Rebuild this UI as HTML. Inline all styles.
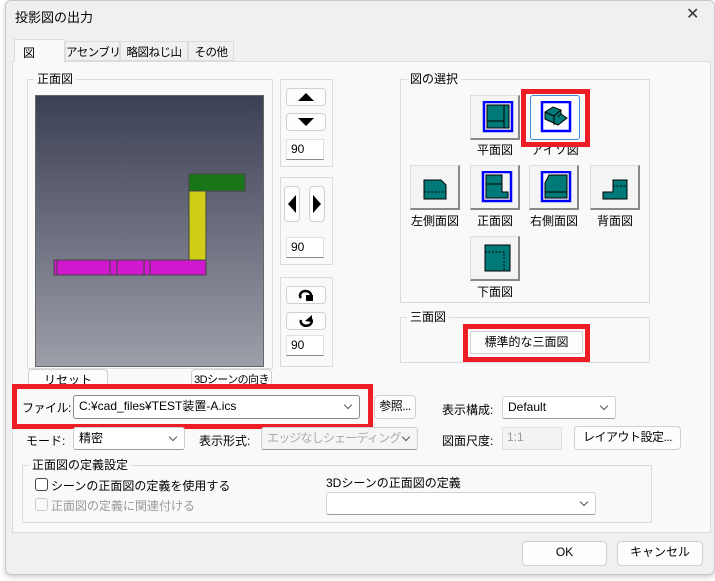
<!DOCTYPE html>
<html><head><meta charset="utf-8"><style>
*{box-sizing:border-box;margin:0;padding:0}
body{width:715px;height:581px;background:#fff;font-family:"Liberation Sans","Noto Sans CJK JP",sans-serif;font-size:12px;color:#000;position:relative;overflow:hidden;white-space:nowrap}
.a{position:absolute}
.win{left:5px;top:0;width:710px;height:575px;background:#f0f0f0;border:1px solid #c8c8c8;border-radius:6px;box-shadow:0 2px 6px rgba(0,0,0,.2)}
.grp{position:absolute;border:1px solid #dcdcdc}
.gl{position:absolute;background:#f9f9f9;padding:0 3px;top:-9px;left:6px;line-height:16px}
.btn{position:absolute;background:#fdfdfd;border:1px solid #d0d0d0;border-radius:4px;text-align:center;line-height:20px;overflow:hidden}
.inp{position:absolute;background:#fff;border:1px solid #e0e0e0;border-bottom:1px solid #888;padding-left:4px;line-height:19px}
.cmb{position:absolute;background:#fff;border:1px solid #d0d0d0;border-bottom-color:#999;border-radius:3px;padding-left:5px;line-height:20px;overflow:hidden}
.cmb:after{content:"";position:absolute;right:8px;top:6px;width:5px;height:5px;border-right:1px solid #555;border-bottom:1px solid #555;transform:rotate(45deg)}
.ib{position:absolute;width:50px;height:45px;background:#f4f4f4;border:1px solid #ddd;border-right:2px solid #888;border-bottom:2px solid #888}
.ib svg{position:absolute;left:5px;top:5px}
.lb{position:absolute;width:70px;text-align:center}
.red{position:absolute;border:5px solid #ee1c25}
.t{position:absolute;top:41px;height:20px;background:#f0f0f0;border:1px solid #dcdcdc;padding:2px 0;text-align:center;font-size:11.5px;letter-spacing:-0.5px}
</style></head><body>
<div class="a win"></div>
<div class="a" style="left:15px;top:7px;font-size:13px">投影図の出力</div>
<div class="a" style="left:686px;top:4px;font-size:16px;color:#333">✕</div>
<div class="a" style="left:12px;top:61px;width:699px;height:472px;background:#f9f9f9;border:1px solid #dcdcdc"></div>
<div class="a" style="left:14px;top:39px;width:51px;height:23px;background:#f9f9f9;border:1px solid #dcdcdc;border-bottom:none;padding:4px 8px">図</div>
<div class="t" style="left:65px;width:55px">アセンブリ</div>
<div class="t" style="left:120px;width:68px">略図ねじ山</div>
<div class="t" style="left:188px;width:46px">その他</div>
<div class="grp" style="left:27px;top:79px;width:246px;height:290px"><div class="gl">正面図</div></div>
<div class="a" style="left:35px;top:95px;width:229px;height:272px;border:1px solid #666;background:linear-gradient(#3c4055,#9c9ea8)">
<svg width="229" height="272" style="position:absolute;left:-1px;top:-1px">
<rect x="154" y="79" width="56" height="17" fill="#187618" stroke="#444"/>
<rect x="154" y="96" width="17" height="69" fill="#d0cd16" stroke="#444"/>
<rect x="19" y="165" width="152" height="15" fill="#d018cf" stroke="#444"/>
<line x1="22" y1="165" x2="22" y2="180" stroke="#444"/>
<line x1="75" y1="165" x2="75" y2="180" stroke="#444"/>
<line x1="82" y1="165" x2="82" y2="180" stroke="#444"/>
<line x1="109" y1="165" x2="109" y2="180" stroke="#444"/>
<line x1="115" y1="165" x2="115" y2="180" stroke="#444"/>
</svg></div>
<div class="grp" style="left:280px;top:79px;width:53px;height:88px"></div>
<div class="btn" style="left:286px;top:88px;width:40px;height:18px"><svg width="38" height="16"><path d="M11 12 L19 4 L27 12Z"/></svg></div>
<div class="btn" style="left:286px;top:113px;width:40px;height:18px"><svg width="38" height="16"><path d="M11 4 L19 12 L27 4Z"/></svg></div>
<div class="inp" style="left:286px;top:139px;width:38px;height:21px">90</div>
<div class="grp" style="left:280px;top:177px;width:53px;height:88px"></div>
<div class="btn" style="left:284px;top:186px;width:16px;height:36px"><svg width="14" height="34"><path d="M11 8 L3 17 L11 26Z"/></svg></div>
<div class="btn" style="left:309px;top:186px;width:16px;height:36px"><svg width="14" height="34"><path d="M3 8 L11 17 L3 26Z"/></svg></div>
<div class="inp" style="left:286px;top:237px;width:38px;height:21px">90</div>
<div class="grp" style="left:280px;top:277px;width:53px;height:90px"></div>
<div class="btn" style="left:286px;top:286px;width:40px;height:18px"><svg width="38" height="16"><path d="M14 11 A5.5 4.5 0 1 1 24 9" fill="none" stroke="#000" stroke-width="2.5"/><path d="M19 8 L26 8 L26 14 L19 14Z"/></svg></div>
<div class="btn" style="left:286px;top:312px;width:40px;height:18px"><svg width="38" height="16"><path d="M24 6 A5.5 4.5 0 1 1 14 7" fill="none" stroke="#000" stroke-width="2.5"/><path d="M18 8 L25 2 L25 9 Z"/></svg></div>
<div class="inp" style="left:286px;top:335px;width:38px;height:21px">90</div>
<div class="grp" style="left:400px;top:79px;width:250px;height:224px"><div class="gl">図の選択</div></div>
<div class="ib" style="left:470px;top:95px"><svg width="40" height="34"><rect x="8" y="1" width="28" height="29" fill="none" stroke="#00f" stroke-width="2.5"/><rect x="11" y="4" width="22" height="23" fill="#007a78" stroke="#000"/><path d="M11 20H28M28 4V27" stroke="#000" fill="none"/></svg></div>
<div class="lb" style="left:460px;top:141px">平面図</div>
<div class="lb" style="left:520px;top:141px">アイソ図</div>
<div class="red" style="left:521px;top:89px;width:69px;height:58px"></div>
<div class="ib" style="left:530px;top:95px;border:1px solid #3a8ad8;border-radius:3px;background:#fdfdfd"><svg width="40" height="34"><rect x="6" y="1" width="28" height="29" fill="none" stroke="#00f" stroke-width="2.5"/><path d="M9 11 L17 6 L25 9 L25 13 L31 17 L22 24 L9 18Z" fill="#007a78" stroke="#000"/><path d="M9 11 L18 15 L25 9M18 15V24M22 16 L25 13" stroke="#000" fill="none"/></svg></div>
<div class="ib" style="left:410px;top:165px"><svg width="40" height="34"><path d="M8 9H25L30 14V28H8Z" fill="#007a78" stroke="#000"/><path d="M8 21H30" stroke="#000" stroke-dasharray="2 1.5"/></svg></div>
<div class="ib" style="left:470px;top:165px"><svg width="40" height="34"><rect x="7" y="1" width="28" height="29" fill="none" stroke="#00f" stroke-width="2.5"/><path d="M10 4H26V21H32V27H10Z" fill="#007a78" stroke="#000"/><path d="M10 13H26" stroke="#000"/></svg></div>
<div class="ib" style="left:529px;top:165px"><svg width="40" height="34"><rect x="7" y="1" width="28" height="29" fill="none" stroke="#00f" stroke-width="2.5"/><path d="M14 4H32V27H10V12Z" fill="#007a78" stroke="#000"/><path d="M10 21H32" stroke="#000"/></svg></div>
<div class="ib" style="left:590px;top:165px"><svg width="40" height="34"><path d="M17 9H31V28H7V21H17Z" fill="#007a78" stroke="#000"/><path d="M17 15H31" stroke="#000" stroke-dasharray="2 1.5"/></svg></div>
<div class="lb" style="left:400px;top:212px">左側面図</div>
<div class="lb" style="left:460px;top:212px">正面図</div>
<div class="lb" style="left:519px;top:212px">右側面図</div>
<div class="lb" style="left:580px;top:212px">背面図</div>
<div class="ib" style="left:470px;top:236px"><svg width="40" height="34"><rect x="9" y="3" width="25" height="26" fill="#007a78" stroke="#000"/><path d="M9 10H28V29" stroke="#000" fill="none" stroke-dasharray="2 1.5"/></svg></div>
<div class="lb" style="left:460px;top:283px">下面図</div>
<div class="grp" style="left:400px;top:317px;width:250px;height:46px"><div class="gl">三面図</div></div>
<div class="red" style="left:463px;top:324px;width:127px;height:38px"></div>
<div class="btn" style="left:470px;top:331px;width:113px;height:23px;border-radius:2px">標準的な三面図</div>
<div class="btn" style="left:28px;top:369px;width:80px;height:22px">リセット</div>
<div class="btn" style="left:191px;top:369px;width:81px;height:22px;font-size:11px;letter-spacing:-0.6px">3Dシーンの向き</div>
<div class="a" style="left:12px;top:384px;width:361px;height:45px;background:#f9f9f9;border:5px solid #ee1c25"></div>
<div class="a" style="left:22px;top:399px;letter-spacing:-0.5px">ファイル:</div>
<div class="cmb" style="left:73px;top:395px;width:287px;height:24px;border-color:#888">C:¥cad_files¥TEST装置-A.ics</div>
<div class="btn" style="left:374px;top:395px;width:42px;height:24px;letter-spacing:-0.5px">参照...</div>
<div class="a" style="left:442px;top:401px">表示構成:</div>
<div class="cmb" style="left:502px;top:396px;width:114px;height:23px">Default</div>
<div class="a" style="left:26px;top:432px">モード:</div>
<div class="cmb" style="left:73px;top:427px;width:112px;height:23px">精密</div>
<div class="a" style="left:199px;top:432px">表示形式:</div>
<div class="cmb" style="left:261px;top:427px;width:157px;height:23px;color:#aaa;background:#f5f5f5;letter-spacing:-0.8px">エッジなしシェーディング</div>
<div class="a" style="left:442px;top:432px">図面尺度:</div>
<div class="inp" style="left:502px;top:427px;width:60px;height:23px;color:#999;background:#f3f3f3;border-bottom-color:#ddd">1:1</div>
<div class="btn" style="left:574px;top:426px;width:107px;height:24px;letter-spacing:-0.5px">レイアウト設定...</div>
<div class="grp" style="left:22px;top:465px;width:630px;height:58px"><div class="gl">正面図の定義設定</div></div>
<div class="a" style="left:35px;top:478px;width:13px;height:13px;border:1px solid #444;border-radius:3px;background:#fff"></div>
<div class="a" style="left:51px;top:477px">シーンの正面図の定義を使用する</div>
<div class="a" style="left:35px;top:498px;width:13px;height:13px;border:1px solid #ccc;border-radius:3px"></div>
<div class="a" style="left:51px;top:497px;color:#999">正面図の定義に関連付ける</div>
<div class="a" style="left:326px;top:474px">3Dシーンの正面図の定義</div>
<div class="cmb" style="left:326px;top:492px;width:270px;height:23px"></div>
<div class="btn" style="left:522px;top:541px;width:85px;height:25px">OK</div>
<div class="btn" style="left:617px;top:541px;width:86px;height:25px">キャンセル</div>
</body></html>
